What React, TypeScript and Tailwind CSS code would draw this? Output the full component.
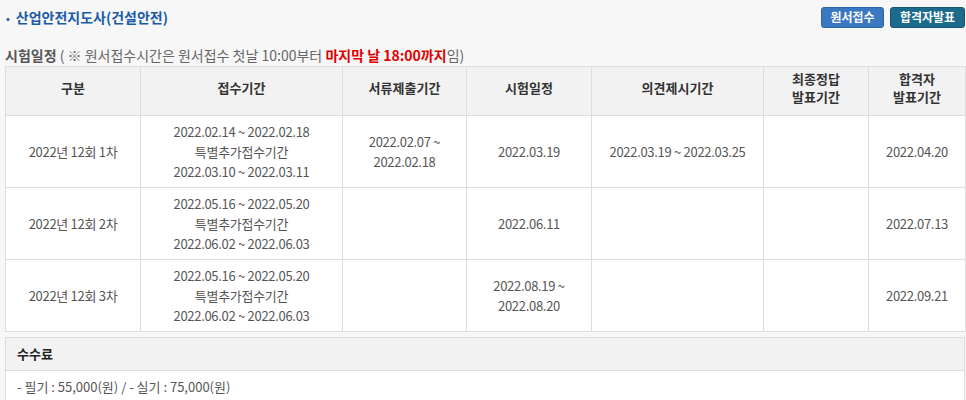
const rows = [
  {
    label: "2022년 12회 1차",
    receipt: ["2022.02.14 ~ 2022.02.18", "특별추가접수기간", "2022.03.10 ~ 2022.03.11"],
    docs: ["2022.02.07 ~", "2022.02.18"],
    exam: ["2022.03.19"],
    opinion: "2022.03.19 ~ 2022.03.25",
    answer: "",
    pass: "2022.04.20",
  },
  {
    label: "2022년 12회 2차",
    receipt: ["2022.05.16 ~ 2022.05.20", "특별추가접수기간", "2022.06.02 ~ 2022.06.03"],
    docs: [],
    exam: ["2022.06.11"],
    opinion: "",
    answer: "",
    pass: "2022.07.13",
  },
  {
    label: "2022년 12회 3차",
    receipt: ["2022.05.16 ~ 2022.05.20", "특별추가접수기간", "2022.06.02 ~ 2022.06.03"],
    docs: [],
    exam: ["2022.08.19 ~", "2022.08.20"],
    opinion: "",
    answer: "",
    pass: "2022.09.21",
  },
];

function Lines({ items }: { items: string[] }) {
  return (
    <>
      {items.map((t, i) => (
        <div key={i}>{t}</div>
      ))}
    </>
  );
}

export default function App() {
  const font = { fontFamily: '"Noto Sans CJK KR", sans-serif' };
  return (
    <div className="w-[966px] h-[400px] overflow-hidden bg-[#f7f7f7] px-[5px] text-[13px] text-[#555]" style={font}>
      {/* title bar */}
      <div className="flex items-center justify-between h-[34px]">
        <h2 className="flex items-center gap-[6px] pl-[1px] text-[14px] font-bold text-[#1a5ba8]">
          <span className="text-[10px]">•</span>
          <span>산업안전지도사(건설안전)</span>
        </h2>
        <div className="flex gap-[6px] -mr-[4px]">
          <button className="w-[63px] h-[21px] rounded-[3px] bg-[#3a78c2] border border-[#2c63a6] text-[12px] font-bold text-white leading-none">
            원서접수
          </button>
          <button className="w-[75px] h-[21px] rounded-[3px] bg-[#1c6a8c] border border-[#16566f] text-[12px] font-bold text-white leading-none">
            합격자발표
          </button>
        </div>
      </div>

      {/* schedule caption */}
      <div className="mt-[11px] h-[21px] leading-[21px] whitespace-nowrap">
        <span className="text-[14px] font-bold text-[#555]">시험일정</span>
        <span className="text-[14px] text-[#666]"> ( ※ 원서접수시간은 원서접수 첫날 10:00부터 </span>
        <span className="text-[14px] font-bold text-[#e00000]">마지막 날 18:00까지</span>
        <span className="text-[14px] text-[#666]">임)</span>
      </div>

      {/* table */}
      <table className="w-[960px] table-fixed border-collapse border border-[#ddd] text-center leading-[20px]">
        <colgroup>
          <col className="w-[135px]" />
          <col className="w-[202px]" />
          <col className="w-[124px]" />
          <col className="w-[125px]" />
          <col className="w-[172px]" />
          <col className="w-[105px]" />
          <col className="w-[97px]" />
        </colgroup>
        <thead>
          <tr className="h-[49px] bg-[#f2f2f2] text-[#333] font-bold">
            <th className="border border-[#ddd] pb-[6px]">구분</th>
            <th className="border border-[#ddd] pb-[6px]">접수기간</th>
            <th className="border border-[#ddd] pb-[6px]">서류제출기간</th>
            <th className="border border-[#ddd] pb-[6px]">시험일정</th>
            <th className="border border-[#ddd] pb-[6px]">의견제시기간</th>
            <th className="border border-[#ddd] pb-[6px] leading-[18px]">
              최종정답
              <br />
              발표기간
            </th>
            <th className="border border-[#ddd] pb-[6px] leading-[18px]">
              합격자
              <br />
              발표기간
            </th>
          </tr>
        </thead>
        <tbody className="bg-white tracking-[-0.3px]">
          {rows.map((r) => (
            <tr key={r.label} className="h-[72px]">
              <td className="border border-[#ddd]">{r.label}</td>
              <td className="border border-[#ddd]">
                <Lines items={r.receipt} />
              </td>
              <td className="border border-[#ddd]">
                <Lines items={r.docs} />
              </td>
              <td className="border border-[#ddd]">
                <Lines items={r.exam} />
              </td>
              <td className="border border-[#ddd]">{r.opinion}</td>
              <td className="border border-[#ddd]">{r.answer}</td>
              <td className="border border-[#ddd]">{r.pass}</td>
            </tr>
          ))}
        </tbody>
      </table>

      {/* fee */}
      <div className="mt-[5px] w-[960px] border border-[#ddd] bg-white">
        <div className="h-[33px] flex items-center px-[11px] bg-[#f2f2f2] border-b border-[#ddd] font-bold text-[#222]">
          수수료
        </div>
        <div className="h-[32px] flex items-center px-[11px] text-[#555]">
          - 필기 : 55,000(원) / - 실기 : 75,000(원)
        </div>
      </div>
    </div>
  );
}
